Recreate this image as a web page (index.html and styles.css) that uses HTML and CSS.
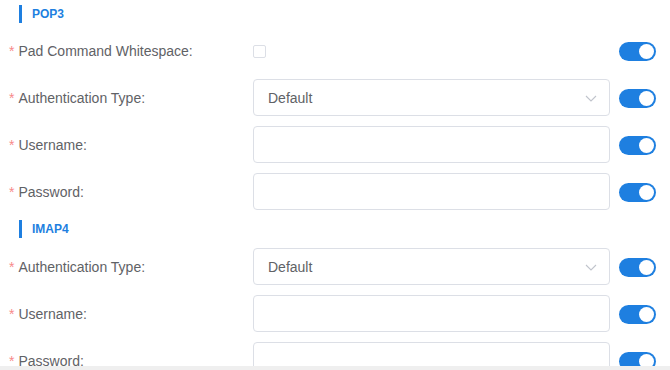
FILE: index.html
```html
<!DOCTYPE html>
<html>
<head>
  <title>Mail Settings</title>
  <link rel="stylesheet" href="styles.css">
</head>
<body>
  <div class="settings">
    <!-- POP3 section -->
    <div class="section-title">POP3</div>

    <div class="form-item">
      <label class="item-label"><span class="req">*</span>Pad Command Whitespace:</label>
      <div class="item-control">
        <span class="checkbox"></span>
      </div>
      <span class="switch on"><span class="knob"></span></span>
    </div>

    <div class="form-item">
      <label class="item-label"><span class="req">*</span>Authentication Type:</label>
      <div class="item-control">
        <div class="select">
          <span>Default</span>
          <svg class="arrow" width="12" height="7" viewBox="0 0 12 7"><path d="M1 1l5 5 5-5" fill="none" stroke="#c0c4cc" stroke-width="1.1"/></svg>
        </div>
      </div>
      <span class="switch on"><span class="knob"></span></span>
    </div>

    <div class="form-item">
      <label class="item-label"><span class="req">*</span>Username:</label>
      <div class="item-control">
        <input type="text" class="input">
      </div>
      <span class="switch on"><span class="knob"></span></span>
    </div>

    <div class="form-item">
      <label class="item-label"><span class="req">*</span>Password:</label>
      <div class="item-control">
        <input type="password" class="input">
      </div>
      <span class="switch on"><span class="knob"></span></span>
    </div>

    <!-- IMAP4 section -->
    <div class="section-title">IMAP4</div>

    <div class="form-item">
      <label class="item-label"><span class="req">*</span>Authentication Type:</label>
      <div class="item-control">
        <div class="select">
          <span>Default</span>
          <svg class="arrow" width="12" height="7" viewBox="0 0 12 7"><path d="M1 1l5 5 5-5" fill="none" stroke="#c0c4cc" stroke-width="1.1"/></svg>
        </div>
      </div>
      <span class="switch on"><span class="knob"></span></span>
    </div>

    <div class="form-item">
      <label class="item-label"><span class="req">*</span>Username:</label>
      <div class="item-control">
        <input type="text" class="input">
      </div>
      <span class="switch on"><span class="knob"></span></span>
    </div>

    <div class="form-item">
      <label class="item-label"><span class="req">*</span>Password:</label>
      <div class="item-control">
        <input type="password" class="input">
      </div>
      <span class="switch on"><span class="knob"></span></span>
    </div>
  </div>

  <div class="bottom-bar"></div>
</body>
</html>
```

FILE: styles.css
```css
/* Reset */
* {
  box-sizing: border-box;
  margin: 0;
  padding: 0;
}

body {
  font-family: "Liberation Sans", Arial, sans-serif;
  font-size: 14px;
  color: #606266;
  background: #fff;
  overflow: hidden;
}

.settings {
  padding-top: 5px;
}

/* Section headers */
.section-title {
  margin-left: 19px;
  height: 18px;
  line-height: 18px;
  padding-left: 10px;
  border-left: 3px solid #1e7fe0;
  color: #1e7fe0;
  font-size: 12px;
  font-weight: bold;
  margin-bottom: 9px;
}

.form-item + .section-title {
  margin-top: 10px;
  margin-bottom: 10px;
}

/* Form rows */
.form-item {
  display: flex;
  align-items: center;
  height: 37px;
  margin-bottom: 10px;
}

.item-label {
  width: 253px;
  padding-left: 9px;
  color: #5f6266;
  white-space: nowrap;
}

.req {
  color: #f78a8a;
  margin-right: 4px;
}

.item-control {
  width: 357px;
  height: 37px;
  display: flex;
  align-items: center;
}

.checkbox {
  width: 13px;
  height: 13px;
  border: 1px solid #dcdfe6;
  border-radius: 2px;
  background: #fff;
  margin-top: 1px;
}

.input,
.select {
  width: 100%;
  height: 37px;
  border: 1px solid #dcdfe6;
  border-radius: 4px;
  background: #fff;
  font-family: inherit;
  font-size: 14px;
  color: #606266;
  outline: none;
}

.select {
  display: flex;
  align-items: center;
  justify-content: space-between;
  padding: 0 12px 0 14px;
}

.arrow {
  margin-top: 1px;
}

/* Switches */
.switch {
  position: relative;
  width: 37px;
  height: 19px;
  margin-left: 9px;
  border-radius: 10px;
  background: #dcdfe6;
  margin-top: 2px;
}

.switch.on {
  background: #1e7fe0;
}

.knob {
  position: absolute;
  top: 2px;
  left: 2px;
  width: 15px;
  height: 15px;
  border-radius: 50%;
  background: #fff;
}

.switch.on .knob {
  left: 20px;
}

.bottom-bar {
  position: fixed;
  left: 0;
  right: 0;
  bottom: 0;
  height: 4px;
  background: #efefef;
}
```
